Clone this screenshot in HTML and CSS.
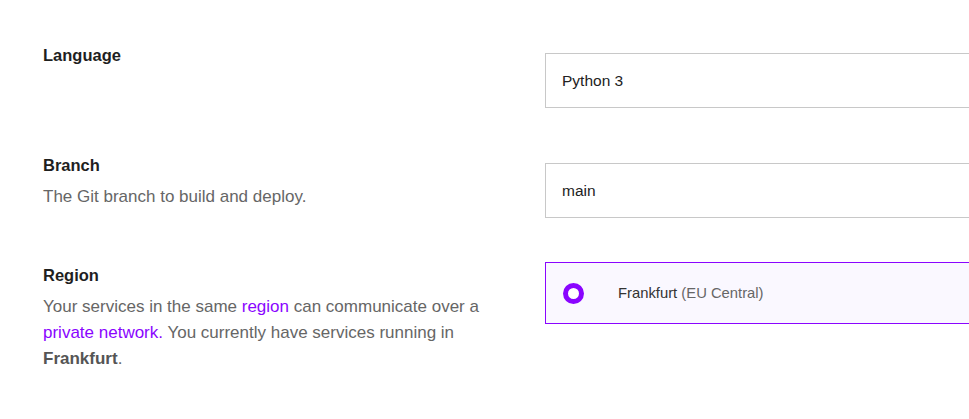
FILE: index.html
```html
<!DOCTYPE html>
<html lang="en">
<head>
<meta charset="utf-8">
<title>Settings</title>
<link rel="stylesheet" href="styles.css">
</head>
<body>
<main class="form">
  <section class="row">
    <div class="info">
      <h3 class="label">Language</h3>
    </div>
    <div class="control">
      <div class="field">Python 3</div>
    </div>
  </section>
  <section class="row">
    <div class="info">
      <h3 class="label">Branch</h3>
      <p class="desc">The Git branch to build and deploy.</p>
    </div>
    <div class="control">
      <div class="field">main</div>
    </div>
  </section>
  <section class="row">
    <div class="info">
      <h3 class="label">Region</h3>
      <p class="desc">Your services in the same <a href="#">region</a> can communicate over a <a href="#">private network.</a> You currently have services running in <strong>Frankfurt</strong>.</p>
    </div>
    <div class="control control-top">
      <div class="option">
        <span class="radio"></span>
        <span class="option-text">Frankfurt <span class="muted">(EU Central)</span></span>
      </div>
    </div>
  </section>
</main>
</body>
</html>
```

FILE: styles.css
```css
html, body {
  margin: 0;
  padding: 0;
  background: #ffffff;
  overflow: hidden;
}
body {
  font-family: "Liberation Sans", Arial, sans-serif;
  color: #222222;
}
.form {
  padding: 43px 0 0 43px;
  display: flex;
  flex-direction: column;
  gap: 45px;
}
.row {
  display: grid;
  grid-template-columns: 502px 480px;
  align-items: start;
}
.info {
  width: 450px;
}
.label {
  margin: 0;
  font-size: 16.5px;
  line-height: 24px;
  font-weight: 700;
  color: #1f1f1f;
}
.desc {
  margin: 7px 0 0;
  font-size: 17px;
  line-height: 26px;
  color: #666666;
}
.desc a {
  color: #8a05ff;
  text-decoration: none;
}
.desc strong {
  color: #555555;
  font-weight: 700;
}
.control {
  padding-top: 10px;
}
.control-top {
  padding-top: 0;
  margin-top: -1px;
}
.field {
  box-sizing: border-box;
  height: 55px;
  border: 1px solid #c8c8c8;
  padding: 0 16px;
  display: flex;
  align-items: center;
  font-size: 15.5px;
  color: #222222;
}
.option {
  box-sizing: border-box;
  height: 62px;
  border: 1px solid #8a05ff;
  background: #faf8ff;
  display: flex;
  align-items: center;
  padding-left: 17px;
  gap: 34px;
  font-size: 14.8px;
  color: #333333;
}
.radio {
  box-sizing: border-box;
  width: 21px;
  height: 21px;
  border-radius: 50%;
  border: 5px solid #8a05ff;
  background: #ffffff;
  flex: none;
}
.muted {
  color: #666666;
}
```
